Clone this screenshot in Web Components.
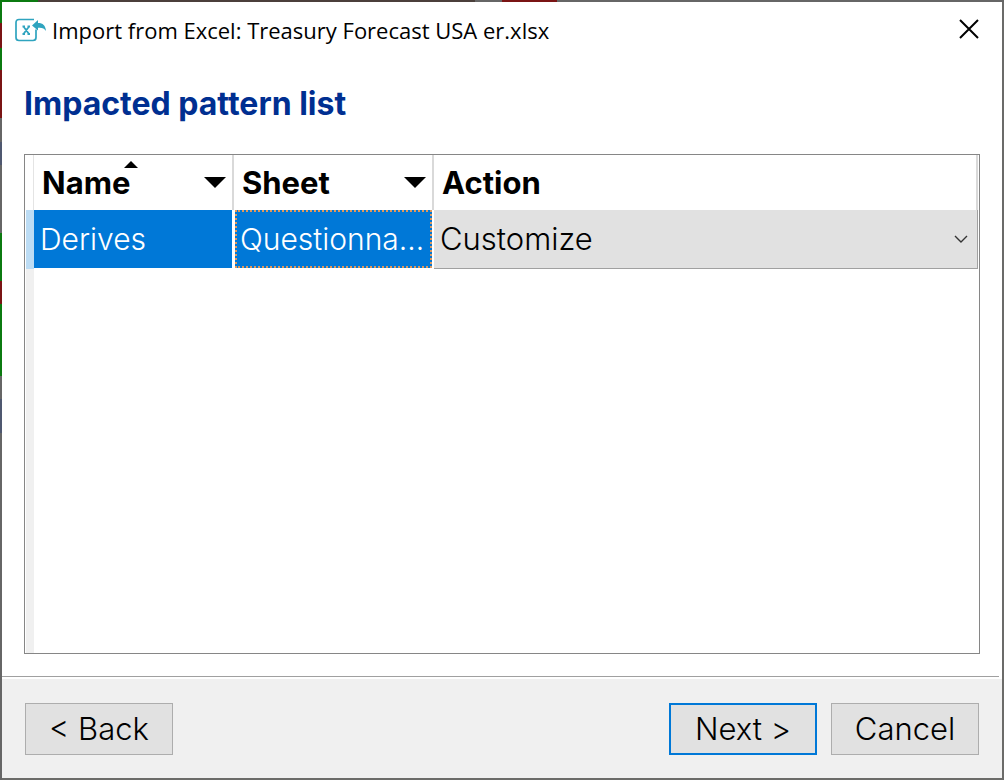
<!DOCTYPE html>
<html lang="en">
<head>
<meta charset="utf-8">
<title>Import from Excel</title>
<style>
  html, body { margin: 0; }
  body { font-family: Inter, "Open Sans", sans-serif; color: #000; }
</style>
</head>
<body>
<import-dialog>
  <title-bar slot="title">Import from Excel: Treasury Forecast USA er.xlsx</title-bar>
  <span slot="heading">Impacted pattern list</span>
  <pattern-table></pattern-table>
  <wizard-button slot="back">&lt; Back</wizard-button>
  <wizard-button slot="actions" primary>Next &gt;</wizard-button>
  <wizard-button slot="actions">Cancel</wizard-button>
</import-dialog>

<template id="import-dialog">
  <style>
    :host {
      display: flex;
      box-sizing: border-box;
      min-height: 100vh;
      padding: 2px;
      /* strip of the spreadsheet behind the dialog */
      background:
        linear-gradient(#7a1414, #7a1414) 502px 0 / 55px 2px no-repeat,
        linear-gradient(90deg, #0b7a10 38px, #4b3f3b 38px 475px, #666 475px) 0 0 / 100% 2px no-repeat,
        linear-gradient(#0b7a10 23px, #7a1414 23px 48px, #0b7a10 48px 70px, #7a1414 70px 118px,
          #666 118px 142px, #4f5870 142px 165px, #666 165px 233px, #0b7a10 233px 281px,
          #7a1414 281px 304px, #0b7a10 304px 376px, #666 376px 399px, #4f5870 399px 433px,
          #666 433px) 0 0 / 2px 100% no-repeat,
        #6b6b69;
    }
    .window { flex: 1; display: flex; flex-direction: column; background: #fff; min-width: 0; }
    main { flex: 1; display: flex; flex-direction: column; padding: 26px 22px 22px; }
    h1 { margin: 0 0 30px; font-size: 32px; line-height: 40px; font-weight: 700; color: #002f91; }
    ::slotted(pattern-table) { flex: 1; }
    hr { margin: 0 3px 0 0; border: 0; border-top: 1px solid #a0a0a0; height: 2px; }
    footer { display: flex; gap: 14px; padding: 24px 23px 23px; background: #f0f0f0; }
    .space { flex: 1; }
  </style>
  <div class="window">
    <slot name="title"></slot>
    <main>
      <h1><slot name="heading"></slot></h1>
      <slot></slot>
    </main>
    <hr>
    <footer>
      <slot name="back"></slot>
      <div class="space"></div>
      <slot name="actions"></slot>
    </footer>
  </div>
</template>

<template id="title-bar">
  <style>
    :host {
      display: flex; align-items: center; height: 56px; padding: 0 23px 0 13px; gap: 5px;
      font-family: "Open Sans", "Noto Sans", sans-serif; font-size: 22px; line-height: 30px;
    }
    .text { flex: 1; white-space: nowrap; }
    svg { display: block; }
    button { border: 0; padding: 0 0 2px; background: none; }
  </style>
  <svg width="32" height="24" viewBox="0 0 32 24" aria-hidden="true">
    <path d="M19 1.500H4Q1 1.500 1 4.500V19.500Q1 22.500 4 22.500H18Q21 22.500 21 19.500V11.500" fill="none" stroke="#2fa4bf" stroke-width="1.700"/>
    <path d="M7.500 8.500h2.500M12.500 8.500h2.500M7.500 16h2.500M12.500 16h2.500M8.500 8.500l5.500 7.500M14 8.500l-5.500 7.500" fill="none" stroke="#2fa4bf" stroke-width="1.800"/>
    <path d="M17 7.500L23 2V5C28 5 30.500 7.500 31 13C29 10 27 9.500 23 9.800V12.500Z" fill="#2fa4bf"/>
  </svg>
  <span class="text"><slot></slot></span>
  <button aria-label="Close">
    <svg width="20" height="20" viewBox="0 0 20 20"><path d="M1 1L19 19M19 1L1 19" stroke="#000" stroke-width="2" fill="none"/></svg>
  </button>
</template>

<template id="pattern-table">
  <style>
    :host {
      display: flex; flex-direction: column; border: 1px solid #868686; padding-right: 1px;
      background: linear-gradient(#f0f0f0, #f0f0f0) 1px 0 / 8px 100% no-repeat, #fff;
    }
    table { width: 100%; border-collapse: separate; border-spacing: 0; table-layout: fixed; }
    .gutter { width: 9px; }
    .fixed { width: 200px; }
    th, td { padding: 0; box-sizing: border-box; text-align: left; }
    th { height: 55px; background: #fff; border-right: 2px solid #d9d9d9; font-size: 31px; line-height: 40px; font-weight: 700; }
    th.gutter { border-right: 1px solid #e4e4e4; }
    .head { display: flex; align-items: center; justify-content: space-between; position: relative; padding: 0 6px 0 8px; }
    .sort { position: absolute; left: 90px; top: -2px; }
    svg { display: block; }
    td { height: 59px; font-size: 30px; line-height: 40px; font-weight: 300; }
    td.gutter { background: linear-gradient(#bcdcf4, #bcdcf4) 1px 0 / 8px 100% no-repeat; }
    td.picked { color: #fff; background: #fff; border-right: 2px solid #fff; border-bottom: 1px solid #fff; }
    .value { box-sizing: border-box; height: 58px; line-height: 56px; padding: 1px 6px; background: #0078d7; white-space: nowrap; overflow: hidden; }
    .focus { margin-left: 1px; padding: 0 3px; border: 2px dotted #e0985c; line-height: 54px; }
    .choice { position: relative; }
    .choice svg { position: absolute; right: 10px; top: 25px; pointer-events: none; }
    select {
      display: block; width: 100%; height: 59px; box-sizing: border-box; appearance: none; margin: 0;
      padding: 0 30px 0 6px; border: 0 solid #a0a0a0; border-width: 0 1px 1px 0; border-radius: 0;
      background: #e1e1e1; color: #000; font: inherit; font-size: 31px;
    }
  </style>
  <table>
    <thead>
      <tr>
        <th class="gutter"></th>
        <th class="fixed" aria-sort="ascending"><div class="head">Name
          <svg class="sort" width="14" height="7"><path d="M0 7L7 0L14 7Z"/></svg>
          <svg width="22" height="11"><path d="M0 0H22L11 11Z"/></svg></div></th>
        <th class="fixed"><div class="head">Sheet
          <svg width="22" height="11"><path d="M0 0H22L11 11Z"/></svg></div></th>
        <th><div class="head">Action</div></th>
      </tr>
    </thead>
    <tbody>
      <tr>
        <td class="gutter"></td>
        <td class="picked"><div class="value">Derives</div></td>
        <td class="picked"><div class="value focus">Questionna…</div></td>
        <td><div class="choice">
          <select aria-label="Action"><option>Customize</option></select>
          <svg width="14" height="9"><path d="M1 1L7 7L13 1" fill="none" stroke="#333" stroke-width="1.400"/></svg>
        </div></td>
      </tr>
    </tbody>
  </table>
</template>

<template id="wizard-button">
  <style>
    :host { display: block; }
    button {
      display: block; box-sizing: border-box; width: 148px; height: 52px; padding: 0;
      border: 1px solid #adadad; background: #e1e1e1; color: #000;
      font-family: inherit; font-size: 31px; line-height: 40px; font-weight: 300;
    }
    :host([primary]) button { border: 2px solid #0078d7; }
  </style>
  <button type="button"><slot></slot></button>
</template>

<script>
  class TemplateElement extends HTMLElement {
    constructor() {
      super();
      const template = document.getElementById(this.localName);
      this.attachShadow({ mode: 'open' }).append(template.content.cloneNode(true));
    }
  }
  customElements.define('import-dialog', class extends TemplateElement {});
  customElements.define('title-bar', class extends TemplateElement {});
  customElements.define('pattern-table', class extends TemplateElement {});
  customElements.define('wizard-button', class extends TemplateElement {});
</script>
</body>
</html>
